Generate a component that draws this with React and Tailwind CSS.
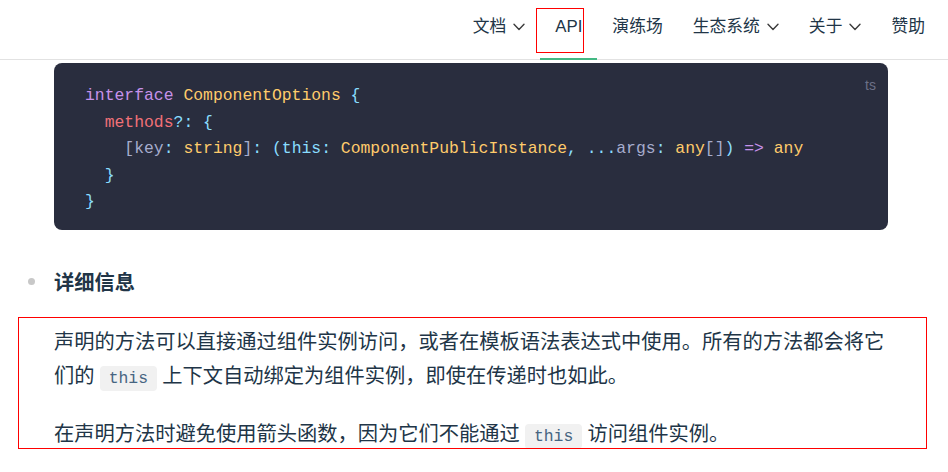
const navItems = [
  { label: "文档", menu: true },
  { label: "API", active: true },
  { label: "演练场" },
  { label: "生态系统", menu: true },
  { label: "关于", menu: true },
  { label: "赞助" },
];

const P = "text-[#a6accd]";
const C = "text-[#89ddff]";
const Y = "text-[#ffcb6b]";
const K = "text-[#c792ea]";
const R = "text-[#f07178]";

function Chevron() {
  return (
    <svg width="12" height="8" viewBox="0 0 12 8" fill="none" className="ml-[7px] mb-[6px]">
      <path d="M1 1.2 L6 6.4 L11 1.2" stroke="#3c3c3c" strokeWidth="1.4" strokeLinecap="round" strokeLinejoin="round" />
    </svg>
  );
}

function InlineCode({ children }) {
  return (
    <code className="rounded-[4px] bg-[#f1f1f1] px-[8.5px] py-[3px] font-['Liberation_Mono',monospace] text-[16.4px] leading-none text-[#476582]">
      {children}
    </code>
  );
}

function Nav() {
  return (
    <header className="flex h-[60px] justify-end border-b border-[#e2e2e2] pr-[8px]">
      {navItems.map((item) => (
        <div key={item.label} className="relative flex items-center px-[15px]">
          <span className="mb-[6px] text-[16.8px] font-normal text-[#213547]">{item.label}</span>
          {item.menu && <Chevron />}
          {item.active && (
            <>
              <span className="absolute bottom-[-1px] left-0 right-0 h-[2px] bg-[#42b883]" />
              <span className="absolute left-[-4px] top-[8px] h-[45px] w-[48px] border border-[#ff0000]" />
            </>
          )}
        </div>
      ))}
    </header>
  );
}

export default function App() {
  return (
    <div className="min-h-[472px] overflow-hidden bg-white font-['Liberation_Sans','Noto_Sans_CJK_SC',sans-serif] text-[#213547]">
      <Nav />
      <main className="ml-[54px] w-[834px] pt-[3px]">
        <div className="relative rounded-[8px] bg-[#292d3e] px-[31px] pb-[14px] pt-[20px]">
          <span className="absolute right-[12px] top-[12px] text-[14px] text-[#6c7087]">ts</span>
          <pre className="font-['Liberation_Mono',monospace] text-[16.4px] leading-[26.6px] text-[#a6accd]">
            <span className={K}>interface</span> <span className={Y}>ComponentOptions</span> <span className={C}>{"{"}</span>
            {"\n  "}
            <span className={R}>methods</span><span className={C}>?:</span> <span className={C}>{"{"}</span>
            {"\n    "}
            <span className={P}>[key</span><span className={C}>:</span> <span className={Y}>string</span><span className={P}>]</span><span className={C}>:</span>{" "}
            <span className={C}>(this:</span> <span className={Y}>ComponentPublicInstance</span><span className={C}>,</span>{" "}
            <span className={C}>...</span><span className={P}>args</span><span className={C}>:</span> <span className={Y}>any</span><span className={P}>[]</span><span className={C}>)</span>{" "}
            <span className={K}>{"=>"}</span> <span className={Y}>any</span>
            {"\n  "}
            <span className={C}>{"}"}</span>
            {"\n"}
            <span className={C}>{"}"}</span>
          </pre>
        </div>

        <ul className="ml-[-36px] mt-[36px]">
          <li className="flex">
            <div className="w-[36px] shrink-0 pl-[10px] pt-[12px]">
              <span className="block h-[7px] w-[7px] rounded-full bg-[#c8c8c8]" />
            </div>
            <div className="flex-1 text-[20.25px] leading-[34px]">
              <strong className="font-bold">详细信息</strong>
              <div className="relative mt-[25px]">
                <span className="pointer-events-none absolute left-[-36px] right-[-39px] top-[-8px] h-[132px] border border-[#ff0000]" />
                <p>
                  声明的方法可以直接通过组件实例访问，或者在模板语法表达式中使用。所有的方法都会将它们的 <InlineCode>this</InlineCode> 上下文自动绑定为组件实例，即使在传递时也如此。
                </p>
                <p className="mt-[24px]">
                  在声明方法时避免使用箭头函数，因为它们不能通过 <InlineCode>this</InlineCode> 访问组件实例。
                </p>
              </div>
            </div>
          </li>
        </ul>
      </main>
    </div>
  );
}
